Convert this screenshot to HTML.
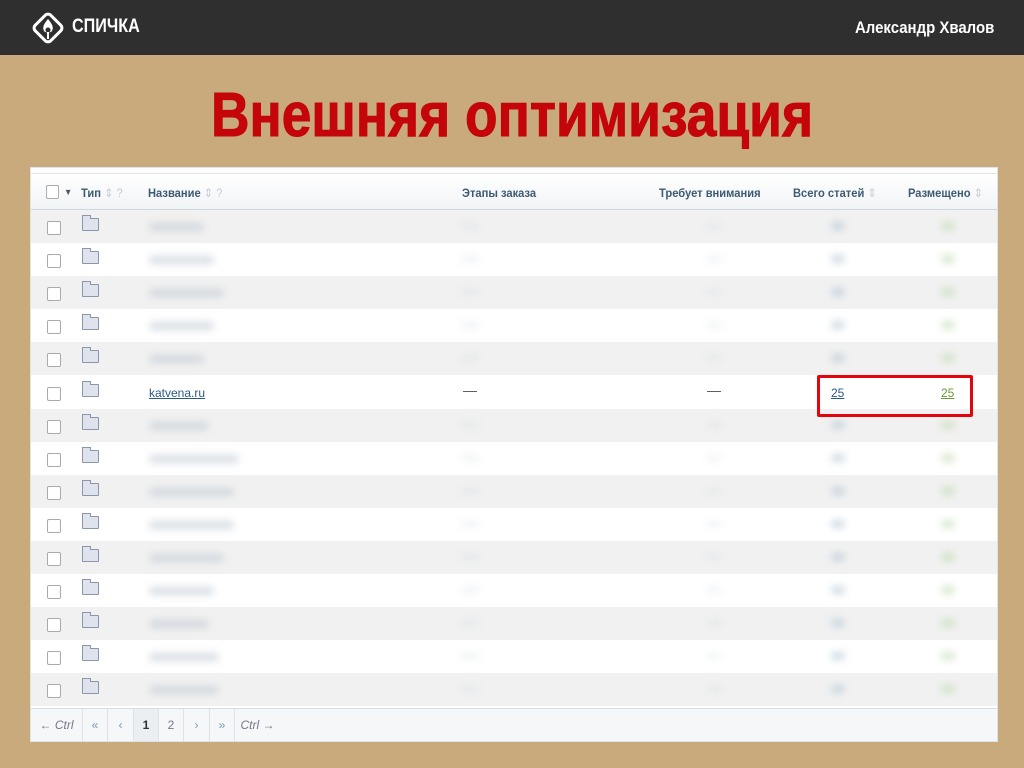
<!DOCTYPE html>
<html><head><meta charset="utf-8"><style>
*{margin:0;padding:0;box-sizing:border-box}
body{width:1024px;height:768px;overflow:hidden;background:#c9aa7c;font-family:"Liberation Sans",sans-serif;position:relative}
.top{position:absolute;left:0;top:0;width:1024px;height:55px;background:#2f2f2f}
.logo{position:absolute;left:30px;top:10px}
.brand{position:absolute;left:72px;top:16px;color:#fff;font-weight:bold;font-size:19px;transform:scaleX(.85);transform-origin:left}
.author{position:absolute;right:30px;top:18px;color:#fff;font-weight:bold;font-size:17px;transform:scaleX(.88);transform-origin:right}
h1{position:absolute;left:0;width:1024px;top:80px;text-align:center;color:#c4050a;font-size:62px;font-weight:bold;-webkit-text-stroke:1px #c4050a}
h1 span{display:inline-block;transform:scaleX(.86)}
.tbl{position:absolute;left:30px;top:167px;width:968px;height:575px;background:#fff;border:1px solid #dde3e8}
.hdr{position:absolute;left:0;top:5px;width:100%;height:37px;background:linear-gradient(#fff,#f1f4f6);border-top:1px solid #dfe5ea;border-bottom:1px solid #cfd8df;font-size:12px;font-weight:bold;color:#3c5a73}
.hdr div{position:absolute;top:12px;transform:scaleX(.93);transform-origin:left}
.row{position:absolute;left:0;width:100%;height:33px}
.cb{position:absolute;left:16px;top:11px;width:14px;height:14px;border:1px solid #aaa;border-radius:2px;background:#fff}
.fd{position:absolute;left:51px;top:8px;width:17px;height:13px;border:1px solid #8c96aa;background:#dfe3ee;border-radius:1px}
.fd:before{content:"";position:absolute;left:-1px;top:-4px;width:7px;height:3px;border:1px solid #8c96aa;border-bottom:none;background:#dfe3ee}
.bl{position:absolute;height:8px;border-radius:4px;filter:blur(4px);background:#b8c2cc;opacity:.55}
.ft{position:absolute;left:0;top:540px;width:100%;height:33px;background:#f6f7f8;border-top:1px solid #d6dde3;font-size:12px;color:#778}
.ft div{position:absolute;top:0;height:32px;line-height:32px;border-right:1px solid #dde3e8;text-align:center}
.red{position:absolute;left:817px;top:375px;width:156px;height:42px;border:3px solid #e4040c;border-radius:2px}
.q{color:#c8ccd2;font-weight:normal}
</style></head><body>
<div class="top">
<svg class="logo" width="36" height="36" viewBox="0 0 36 36"><rect x="7" y="7" width="22" height="22" rx="4" transform="rotate(45 18 18)" fill="none" stroke="#fff" stroke-width="3"/><path d="M18 9c-4 5-6 8-4 12 1 2 7 2 8 0 2-4 0-7-4-12z" fill="#fff"/><circle cx="18" cy="20" r="2.5" fill="#2f2f2f"/><rect x="17" y="22" width="2" height="7" fill="#fff"/></svg>
<div class="brand">СПИЧКА</div>
<div class="author">Александр Хвалов</div>
</div>
<h1><span>Внешняя оптимизация</span></h1>
<div class="tbl">
<div class="hdr">
<div class="cb" style="top:11px;left:15px;position:absolute"></div>
<div style="left:33px;font-size:9px;top:13px;color:#556">▼</div>
<div style="left:50px">Тип <span class="q">⇕ ?</span></div>
<div style="left:117px">Название <span class="q">⇕ ?</span></div>
<div style="left:431px">Этапы заказа</div>
<div style="left:628px">Требует внимания</div>
<div style="left:762px">Всего статей <span class="q">⇕</span></div>
<div style="left:877px">Размещено <span class="q">⇕</span></div>
</div>
<div id="rows"></div>
<div class="ft">
<div style="left:0;width:52px">← <i>Ctrl</i></div>
<div style="left:52px;width:25px;color:#7a9ab5">«</div>
<div style="left:77px;width:26px;color:#7a9ab5">‹</div>
<div style="left:103px;width:25px;background:#eceff2;color:#333;font-weight:bold">1</div>
<div style="left:128px;width:25px">2</div>
<div style="left:153px;width:26px;color:#7a9ab5">›</div>
<div style="left:179px;width:25px;color:#7a9ab5">»</div>
<div style="left:204px;width:45px;border:none"><i>Ctrl</i> →</div>
</div>
</div>
<div class="red"></div>
<script>
var h='',w=[55,65,75,65,55,0,60,90,85,85,75,65,60,70,70];
for(var i=0;i<15;i++){var t=42+i*33.1,g=i%2==0;
h+='<div class="row" style="top:'+t+'px;background:'+(g?'#f1f1f1':'#fff')+'"><div class="cb"></div><div class="fd"></div>';
if(i==5){h+='<div style="position:absolute;left:118px;top:10px;font-size:12px;color:#2a5a8a;text-decoration:underline">katvena.ru</div><div style="position:absolute;left:432px;top:6px;font-size:14px;color:#555">—</div><div style="position:absolute;left:676px;top:6px;font-size:14px;color:#555">—</div><div style="position:absolute;left:800px;top:10px;font-size:12px;color:#2a5a8a;text-decoration:underline">25</div><div style="position:absolute;left:910px;top:10px;font-size:12px;color:#6a9a3a;text-decoration:underline">25</div>';}
else{h+='<div class="bl" style="left:118px;top:13px;width:'+w[i]+'px"></div><div class="bl" style="left:430px;top:14px;width:18px;height:4px;opacity:.3"></div><div class="bl" style="left:676px;top:14px;width:14px;height:4px;opacity:.3"></div><div class="bl" style="left:800px;top:12px;width:14px;background:#a5bccb"></div><div class="bl" style="left:910px;top:12px;width:14px;background:#b5d3a0"></div>';}
h+='</div>';}
document.getElementById('rows').innerHTML=h;
</script>
</body></html>
